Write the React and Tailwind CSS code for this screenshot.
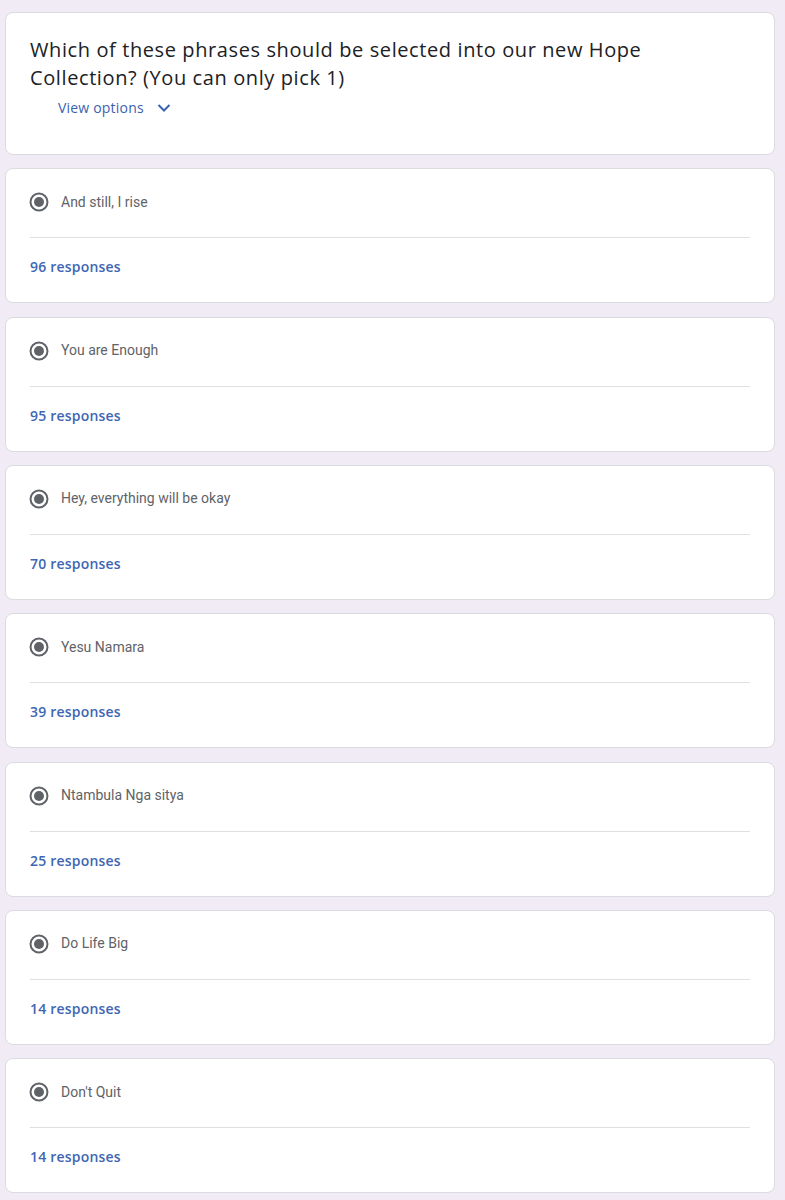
import React from 'react';

const options = [
  { label: 'And still, I rise', count: 96 },
  { label: 'You are Enough', count: 95 },
  { label: 'Hey, everything will be okay', count: 70 },
  { label: 'Yesu Namara', count: 39 },
  { label: 'Ntambula Nga sitya', count: 25 },
  { label: 'Do Life Big', count: 14 },
  { label: "Don't Quit", count: 14 },
];

const Radio = () => (
  <svg width="20" height="20" viewBox="0 0 20 20" className="shrink-0 -ml-[1px]">
    <circle cx="10" cy="10" r="8.5" fill="none" stroke="#5f6368" strokeWidth="2" />
    <circle cx="10" cy="10" r="5" fill="#5f6368" />
  </svg>
);

const App = () => {
  return (
    <div className="min-h-[1200px] bg-[#f0ebf4] pt-[12px] pb-[6px] pl-[5px] pr-[10px] flex flex-col gap-[13.33px]">
      {/* Question header */}
      <div className="bg-white rounded-lg border border-[#dadce0] px-6 pt-[23px] pb-[36px]">
        <h1 className="text-[20px] leading-[28px] text-[#202124] font-['Open_Sans',sans-serif] tracking-[0.6px] pr-[100px]">
          Which of these phrases should be selected into our new Hope Collection? (You can only pick 1)
        </h1>
        <button className="mt-[6px] ml-[28px] flex items-center gap-[12px] text-[14px] leading-[20px] text-[#3b62b0] font-['Open_Sans',sans-serif] tracking-[0.2px]">
          <span>View options</span>
          <svg width="16" height="16" viewBox="0 0 16 16">
            <path d="M2.5 5 L8 10.5 L13.5 5" fill="none" stroke="#3b62b0" strokeWidth="2" />
          </svg>
        </button>
      </div>

      {/* Options */}
      {options.map((o) => (
        <div key={o.label} className="bg-white rounded-lg border border-[#dadce0] px-6 pt-[21px] pb-[25px]">
          <div className="flex items-center gap-[12px] h-[24px]">
            <Radio />
            <span className="text-[14px] text-[#5f6368] font-['Roboto',sans-serif]">{o.label}</span>
          </div>
          <div className="mt-[23px] h-px bg-[#e0e0e0]" />
          <div className="mt-[19px] text-[14px] leading-[20px] font-semibold text-[#4066b3] font-['Open_Sans',sans-serif] tracking-[0.2px]">
            {o.count} responses
          </div>
        </div>
      ))}
    </div>
  );
};

export default App;
